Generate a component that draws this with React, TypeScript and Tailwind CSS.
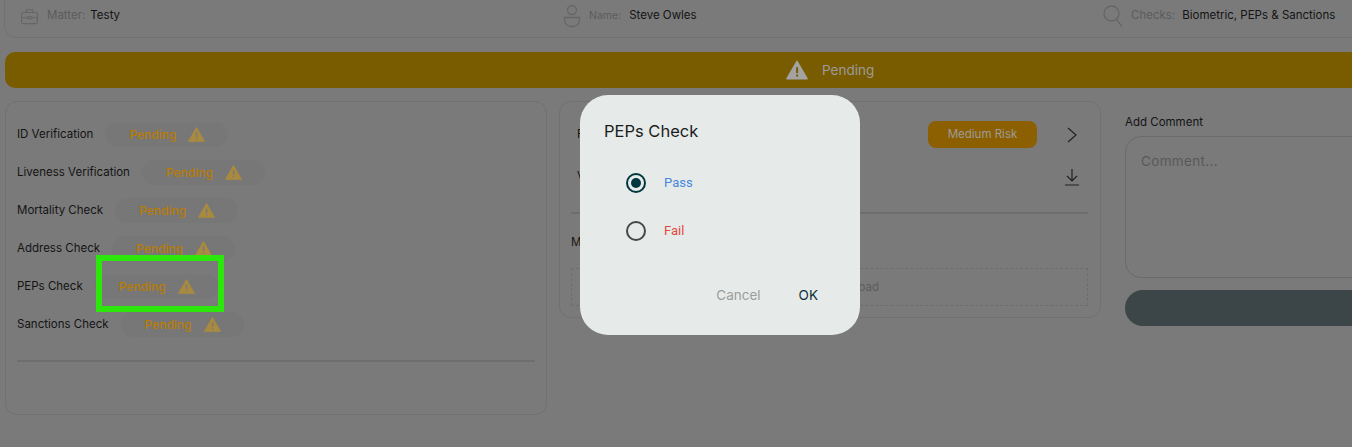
import React from "react";

const Warn = ({ size = 18, fill = "#a98a3f", mark = "#7a7a7a" }: { size?: number; fill?: string; mark?: string }) => (
  <svg width={size} height={size} viewBox="0 0 24 24" className="flex-none">
    <path d="M12 2.5 L23 21.5 H1 Z" fill={fill} stroke={fill} strokeWidth="1.5" strokeLinejoin="round" />
    <rect x="11" y="9" width="2.2" height="6.5" fill={mark} />
    <rect x="11" y="17" width="2.2" height="2.2" fill={mark} />
  </svg>
);

const rows = [
  { label: "ID Verification" },
  { label: "Liveness Verification" },
  { label: "Mortality Check" },
  { label: "Address Check" },
  { label: "PEPs Check", hl: true },
  { label: "Sanctions Check" },
];

export default function App() {
  return (
    <div className="relative w-[1352px] h-[447px] overflow-hidden bg-[#7a7a7a] font-['Inter','Liberation_Sans',sans-serif] text-[#141414]">
      {/* Summary card */}
      <div className="ml-[4px] -mt-[10px] w-[1360px] h-[48px] pt-[4px] flex items-center rounded-b-xl border border-[#717171] text-[11.5px]">
        <div className="flex items-center w-[558px] pl-[15px]">
          <svg width="19" height="19" viewBox="0 0 24 24" fill="none" stroke="#666" strokeWidth="1.4" className="flex-none">
            <rect x="2" y="7" width="20" height="14" rx="2" />
            <path d="M8 7V3.5h8V7M2 13.5h7M15 13.5h7" />
            <rect x="9.5" y="12" width="5" height="3" rx="1" />
          </svg>
          <span className="ml-[8px] text-[#5c5c5c]">Matter:</span>
          <span className="ml-[5px]">Testy</span>
        </div>
        <div className="flex items-center w-[540px]">
          <svg width="18" height="24" viewBox="0 0 18 24" fill="none" stroke="#666" strokeWidth="1.3" className="flex-none">
            <circle cx="9" cy="6" r="4.5" />
            <path d="M1.5 13.5h15v2.5a6.5 6.5 0 0 1-6.5 6.5H8A6.5 6.5 0 0 1 1.5 16Z" />
          </svg>
          <span className="ml-[8px] text-[10.5px] text-[#5c5c5c]">Name:</span>
          <span className="ml-[8px] text-[11.5px]">Steve Owles</span>
        </div>
        <div className="flex items-center">
          <svg width="20" height="22" viewBox="0 0 20 22" fill="none" stroke="#666" strokeWidth="1.3" className="flex-none">
            <circle cx="8.5" cy="8.5" r="7.5" />
            <path d="M13.5 14.5 19 21.5" />
          </svg>
          <span className="ml-[8px] text-[#5c5c5c]">Checks:</span>
          <span className="ml-[7px]">Biometric, PEPs &amp; Sanctions</span>
        </div>
      </div>

      {/* Status banner */}
      <div className="mt-[14px] ml-[5px] w-[1360px] h-[36px] rounded-l-[10px] bg-[#7a5c00] flex items-center pl-[781px] text-[13.5px] text-[#9b9b9b]">
        <Warn size={22} fill="#a3a3a3" mark="#7a5c00" />
        <span className="ml-[14px]">Pending</span>
      </div>

      <div className="mt-[13px] ml-[5px] flex items-start">
        {/* Checks panel */}
        <div className="w-[542px] h-[314px] flex-none rounded-xl border border-[#717171] pl-[11px] pr-[11px] pt-[20px] text-[11.5px]">
          {rows.map((r) => (
            <div key={r.label} className="h-[25px] mb-[13px] flex items-center">
              <span>{r.label}</span>
              <div className="relative w-[123px] ml-3 pl-6 gap-[12px] h-[25px] flex items-center rounded-full bg-[#777777] text-[12px] font-medium text-[#b87c05]">
                <span>Pending</span>
                <Warn size={17} />
                {r.hl && (
                  <div className="absolute left-[1px] -top-[19px] w-[128px] h-[57px] border-[6px] border-[#2ce60c]" />
                )}
              </div>
            </div>
          ))}
          <div className="mt-[23px] h-[2px] bg-[#6e6e6e]" />
        </div>

        {/* Report panel */}
        <div className="ml-[12px] w-[542px] h-[217px] flex-none rounded-xl border border-[#717171] pl-[11px] pr-[12px] pt-[19px] text-[11.5px]">
          <div className="h-[27px] flex items-center justify-between">
            <span className="ml-[6px]">Risk</span>
            <div className="flex items-center">
              <div className="w-[109px] h-[27px] flex items-center justify-center rounded-lg bg-[#8c5f00] text-[#9c9c9c]">Medium Risk</div>
              <svg width="14" height="16" viewBox="0 0 14 16" fill="none" stroke="#222" strokeWidth="1.2" className="ml-[28px] mr-[9px]">
                <path d="M3 1l8 7-8 7" />
              </svg>
            </div>
          </div>
          <div className="mt-[15px] h-[28px] flex items-center justify-between">
            <span className="ml-[6px]">View</span>
            <svg width="14" height="18" viewBox="0 0 14 18" fill="none" stroke="#222" strokeWidth="1.2" className="mr-[9px]">
              <path d="M7 1v12M2 8l5 5 5-5M0 17h14" />
            </svg>
          </div>
          <div className="mt-[21px] h-[2px] bg-[#6e6e6e]" />
          <div className="mt-[20px]">Manual</div>
          <div className="mt-[17px] h-[38px] flex items-center justify-end border border-dashed border-[#6e6e6e] text-[#5c5c5c] pr-[208px]">Upload</div>
        </div>

        {/* Comment column */}
        <div className="ml-[24px] w-[400px] flex-none">
          <div className="text-[11.5px] mt-[14px] h-[14px] leading-[14px]">Add Comment</div>
          <div className="mt-[7px] h-[142px] rounded-2xl border border-[#6a6a6a] px-[15px] pt-[15px] text-[13.5px] leading-[18px] tracking-wide text-[#595959]">Comment...</div>
          <div className="mt-[12px] h-[36px] rounded-full bg-[#3c4648]" />
        </div>
      </div>

      {/* Dialog */}
      <div className="absolute left-[580px] top-[95px] w-[280px] h-[240px] rounded-[28px] bg-[#e6ebe9] pl-[24px] pr-[26px] pt-[25px] flex flex-col">
        <div className="text-[16.5px] leading-[22px] text-[#1a1c1c]">PEPs Check</div>
        <div className="mt-[31px] ml-[22px] flex items-center h-[20px]">
          <span className="w-[20px] h-[20px] rounded-full border-2 border-[#00363f] flex items-center justify-center">
            <span className="w-[10px] h-[10px] rounded-full bg-[#00363f]" />
          </span>
          <span className="ml-[18px] text-[13px] font-['Roboto',sans-serif] text-[#4a86e0]">Pass</span>
        </div>
        <div className="mt-[28px] ml-[22px] flex items-center h-[20px]">
          <span className="w-[20px] h-[20px] rounded-full border-2 border-[#444848]" />
          <span className="ml-[18px] text-[13px] font-['Roboto',sans-serif] text-[#e2483d]">Fail</span>
        </div>
        <div className="mt-[45px] flex justify-end items-center gap-[38px] text-[13.5px] leading-[18px]">
          <span className="text-[#9a9d9c]">Cancel</span>
          <span className="text-[#0b3038] mr-[16px]">OK</span>
        </div>
      </div>
    </div>
  );
}
